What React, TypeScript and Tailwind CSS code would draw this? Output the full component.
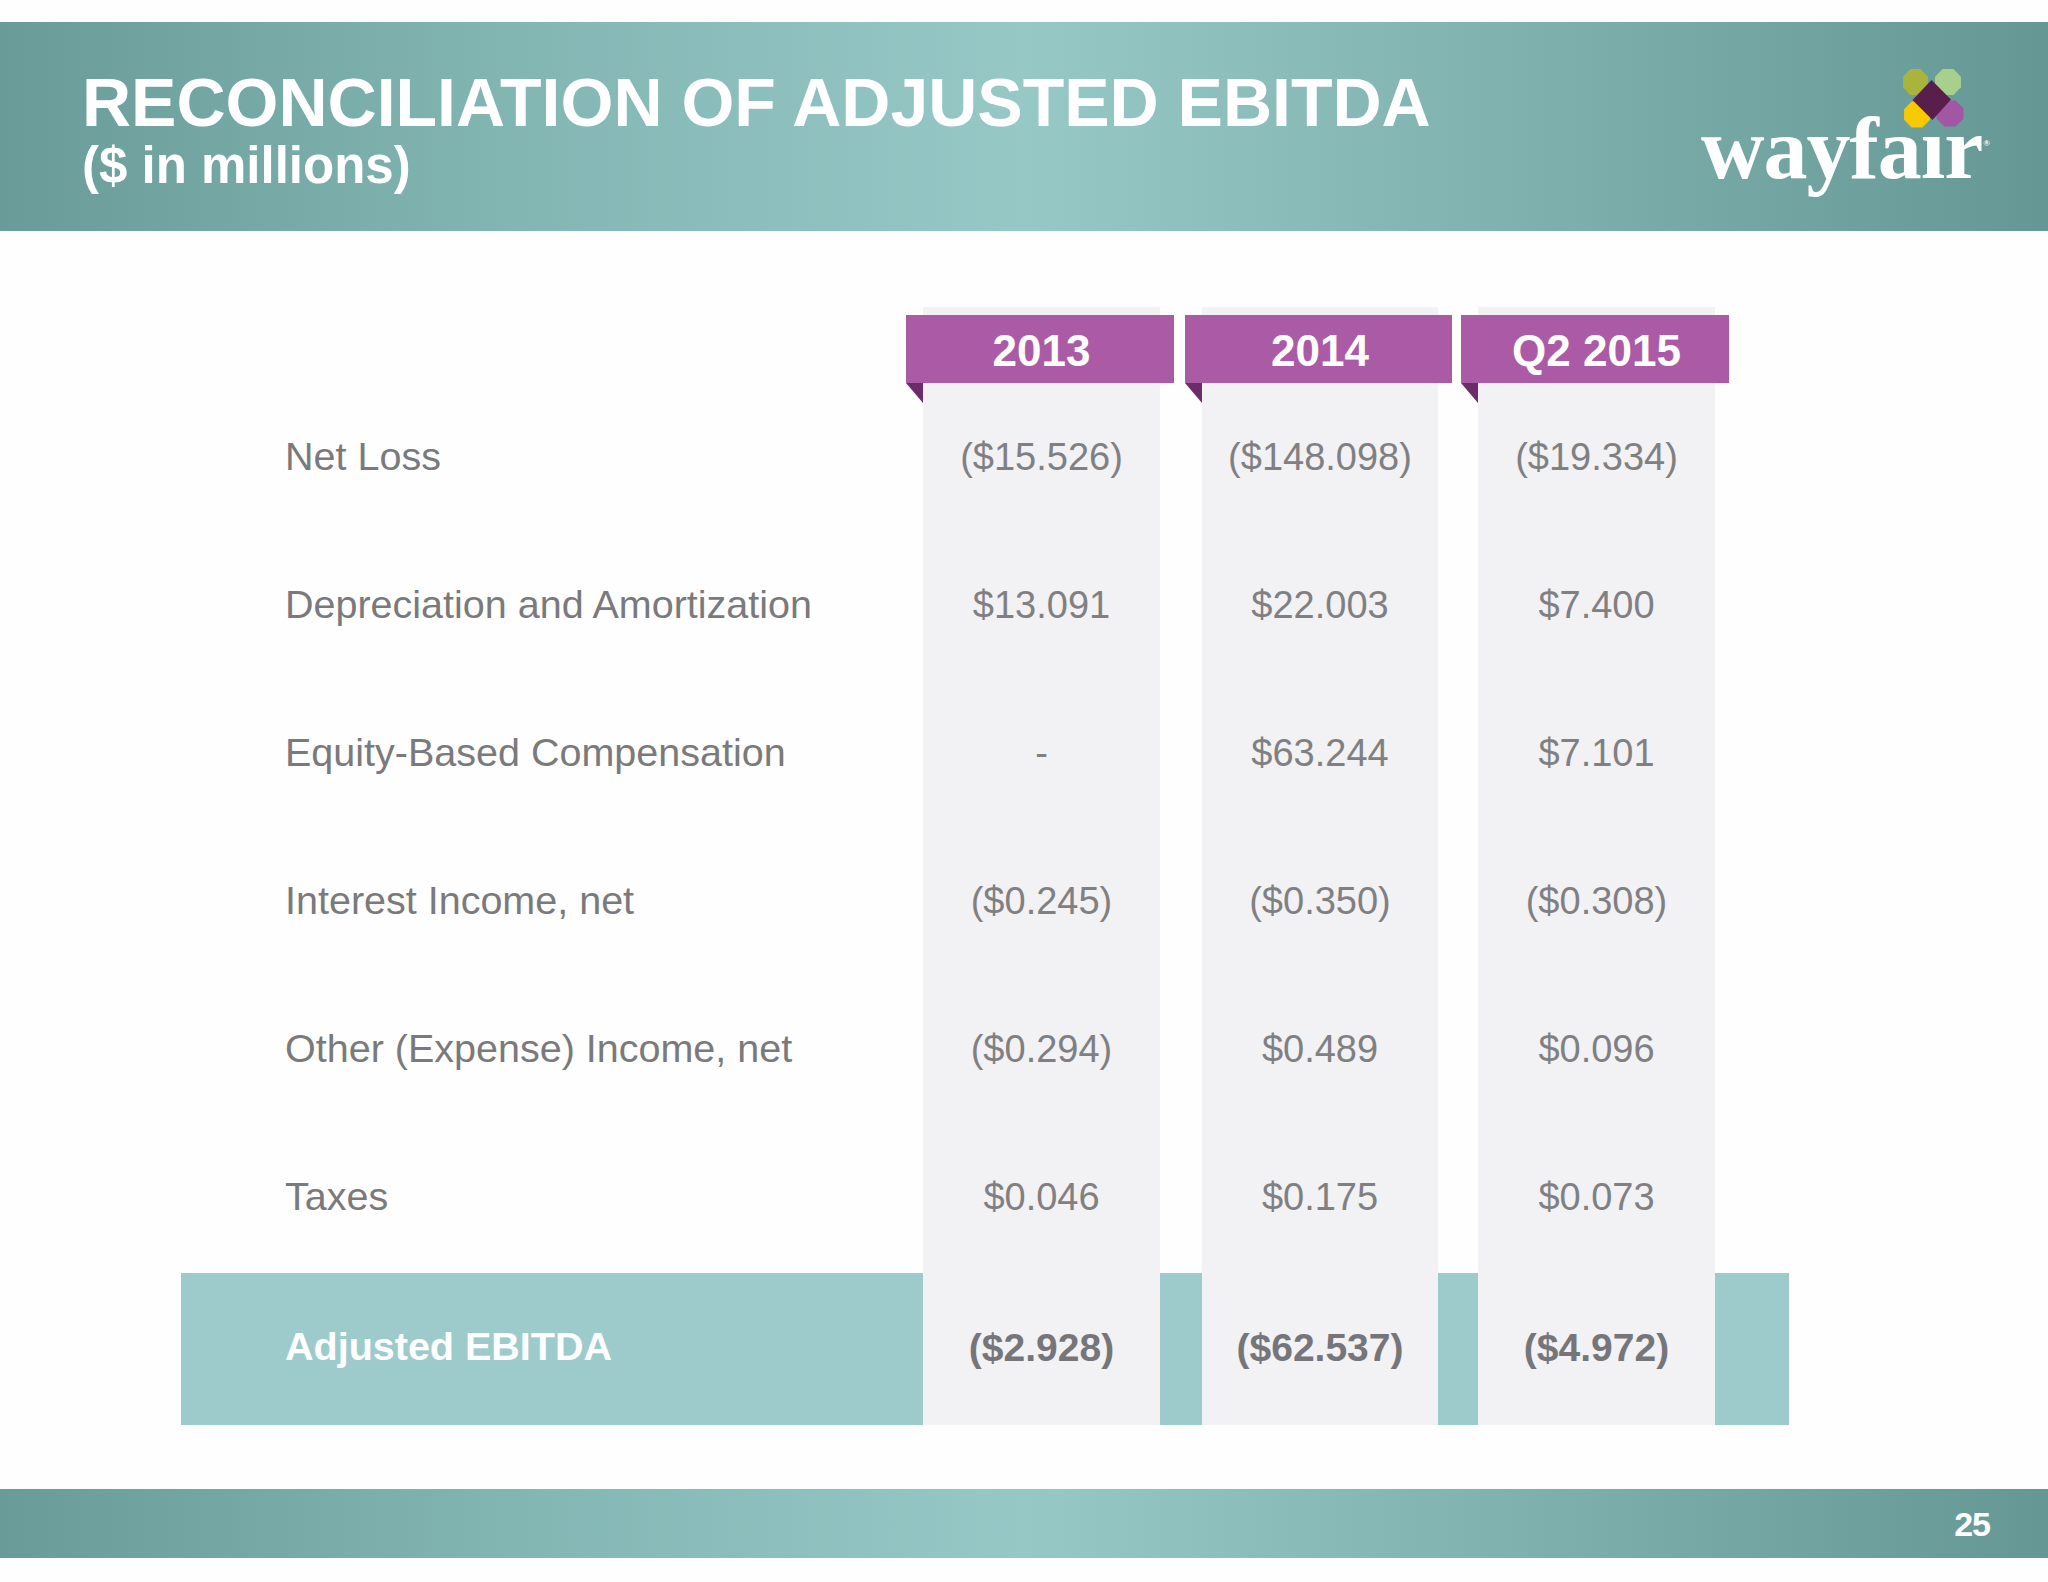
import React from "react";

const rows: [string, string, string, string][] = [
  ["Net Loss", "($15.526)", "($148.098)", "($19.334)"],
  ["Depreciation and Amortization", "$13.091", "$22.003", "$7.400"],
  ["Equity-Based Compensation", "-", "$63.244", "$7.101"],
  ["Interest Income, net", "($0.245)", "($0.350)", "($0.308)"],
  ["Other (Expense) Income, net", "($0.294)", "$0.489", "$0.096"],
  ["Taxes", "$0.046", "$0.175", "$0.073"],
];
const total = ["Adjusted EBITDA", "($2.928)", "($62.537)", "($4.972)"];
const headers = ["2013", "2014", "Q2 2015"];

function Logo() {
  const oct = (cx: number, cy: number, rx: number, ry: number) => {
    const pts: string[] = [];
    for (let i = 0; i < 8; i++) {
      const a = (Math.PI / 4) * i + Math.PI / 8;
      pts.push(`${(cx + rx * Math.cos(a)).toFixed(2)},${(cy + ry * Math.sin(a)).toFixed(2)}`);
    }
    return pts.join(" ");
  };
  return (
    <div className="flex flex-col items-end pt-[46px] pr-[58px]">
      <svg width="64" height="64" viewBox="0 0 64 64" className="relative z-10 mr-[23px]">
        <polygon points={oct(12.5, 14, 13.5, 14)} fill="#a9b43c" />
        <polygon points={oct(45, 14, 14, 14)} fill="#a8d08d" />
        <polygon points={oct(14, 46.5, 14, 14)} fill="#f6c900" />
        <polygon points={oct(47, 45.5, 14.5, 14)} fill="#a257a5" />
        <polygon points="28.5,12 48,31.5 29.5,52 9.5,32" fill="#5a1e4d" />
      </svg>
      <div className="-mt-[27px] flex items-start text-white font-bold leading-none font-['Liberation_Serif',serif]">
        <span className="text-[88px] leading-none tracking-[-1px]">wayfaır</span>
        <span className="text-[9px] mt-[34px] ml-[1px]">®</span>
      </div>
    </div>
  );
}

function GreyCol({ idx, width }: { idx: number; width: string }) {
  return (
    <div className={`flex flex-col bg-[#f2f1f4] ${width}`}>
      <div className="h-[8px]" />
      <div className="relative -ml-[17px] -mr-[14px] h-[68px] bg-[#ab5ba6] flex items-center justify-center pl-[3px] pt-[4px]">
        <span className="text-white font-bold text-[44px] leading-none">{headers[idx]}</span>
        <svg className="absolute left-0 top-full" width="17" height="20" viewBox="0 0 17 20">
          <polygon points="0,0 17,0 17,20" fill="#6c2c6a" />
        </svg>
      </div>
      {rows.map((r, i) => (
        <div key={i} className="h-[148px] flex items-center justify-center text-[38px] text-[#808082]">
          {r[idx + 1]}
        </div>
      ))}
      <div className="h-[154px] flex items-center justify-center text-[39px] font-bold text-[#76767a]">
        {total[idx + 1]}
      </div>
    </div>
  );
}

function GapCol({ width }: { width: string }) {
  return (
    <div className={`flex flex-col ${width}`}>
      <div className="h-[966px]" />
      <div className="h-[152px] bg-[#9dcbcc]" />
    </div>
  );
}

export default function App() {
  return (
    <div className="w-[2048px] h-[1582px] bg-[#fefefe] overflow-hidden flex flex-col font-['Liberation_Sans',Arial,sans-serif]">
      <div className="h-[22px]" />
      <header className="h-[209px] flex justify-between bg-[linear-gradient(to_right,#699c99_0%,#82b6b3_25%,#96c8c6_50%,#7eb0ad_75%,#659794_100%)]">
        <div className="pl-[82px] pt-[47px] text-white font-bold">
          <div className="text-[68px] leading-[67px]">RECONCILIATION OF ADJUSTED EBITDA</div>
          <div className="text-[51px] leading-[50px] mt-[5px]">($ in millions)</div>
        </div>
        <Logo />
      </header>

      <main className="mt-[76px] ml-[181px] flex">
        <div className="w-[742px] flex flex-col">
          <div className="h-[76px]" />
          {rows.map((r, i) => (
            <div key={i} className="h-[148px] flex items-center pl-[104px] text-[39.5px] text-[#7a7a7c]">
              {r[0]}
            </div>
          ))}
          <div className="h-[2px]" />
          <div className="h-[152px] bg-[#9dcbcc] flex items-center pl-[104px] text-white font-bold text-[39.5px] pb-[4px]">
            {total[0]}
          </div>
        </div>
        <GreyCol idx={0} width="w-[237px]" />
        <GapCol width="w-[42px]" />
        <GreyCol idx={1} width="w-[236px]" />
        <GapCol width="w-[40px]" />
        <GreyCol idx={2} width="w-[237px]" />
        <GapCol width="w-[74px]" />
      </main>

      <footer className="mt-[64px] h-[69px] flex items-center justify-end pr-[58px] bg-[linear-gradient(to_right,#699c99_0%,#82b6b3_25%,#96c8c6_50%,#7eb0ad_75%,#659794_100%)]">
        <span className="text-white font-bold text-[34px] leading-none tracking-[-1px]">25</span>
      </footer>
    </div>
  );
}
